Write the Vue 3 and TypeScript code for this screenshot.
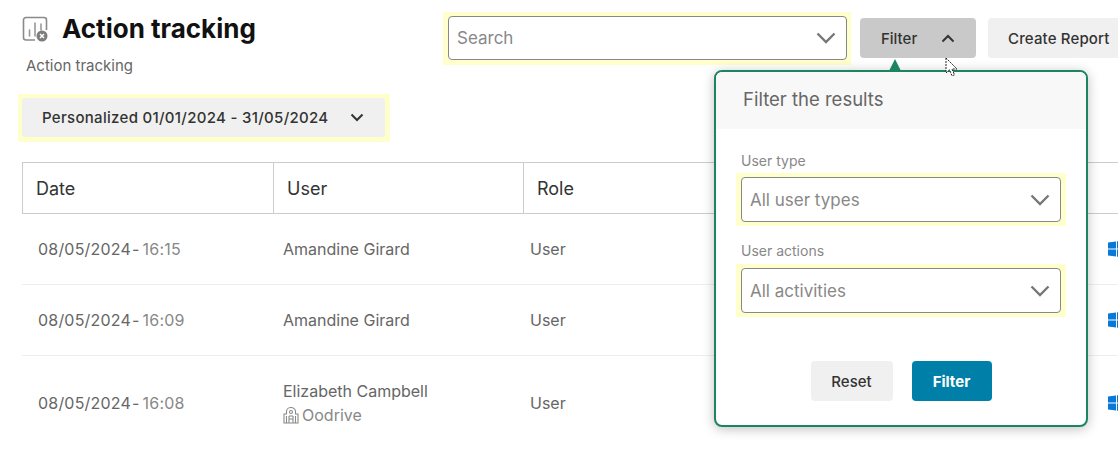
<template>
  <div class="page">
    <header class="top">
      <div class="heading">
        <div class="title-row">
          <svg class="title-icon" width="26" height="26" viewBox="0 0 26 26" fill="none">
            <path d="M13 24H4a2.500 2.500 0 0 1-2.500-2.500V4A2.500 2.500 0 0 1 4 1.500h18A2.500 2.500 0 0 1 24.500 4v10" stroke="#8a8a8a" stroke-width="1.600" />
            <path d="M7.500 14v6M13 7v13M19 8v6" stroke="#999" stroke-width="1.600" stroke-linecap="round" />
            <circle cx="20" cy="20" r="5.500" fill="#7d7d7d" />
            <path d="M18 18l4 4M22 18l-4 4" stroke="#fff" stroke-width="1.500" />
          </svg>
          <h1>Action tracking</h1>
        </div>
        <p class="subtitle">Action tracking</p>
        <div class="hl date-hl">
          <button class="date-btn">
            <span>Personalized 01/01/2024 - 31/05/2024</span>
            <svg width="14" height="9" viewBox="0 0 14 9" fill="none"><path d="M1.500 1.500L7 7l5.500-5.500" stroke="#333" stroke-width="2" /></svg>
          </button>
        </div>
      </div>

      <div class="toolbar">
        <div class="hl search-hl">
          <div class="select search">
            <span>Search</span>
            <svg class="chev" width="20" height="12" viewBox="0 0 20 12" fill="none"><path d="M1.500 1.500L10 10l8.500-8.500" stroke="#777" stroke-width="2.400" /></svg>
          </div>
        </div>
        <button class="btn filter-toggle">
          <span>Filter</span>
          <svg width="14" height="9" viewBox="0 0 14 9" fill="none"><path d="M1.500 7.500L7 2l5.500 5.500" stroke="#333" stroke-width="2" /></svg>
        </button>
        <button class="btn report">Create Report</button>
      </div>
    </header>

    <section class="table">
      <div class="thead">
        <div v-for="col in columns" :key="col" class="th">{{ col }}</div>
      </div>
      <div v-for="row in rows" :key="row.time" class="tr" :class="{ tall: row.company }">
        <div class="td date">{{ row.date }}<span class="dash">-</span><span class="time">{{ row.time }}</span></div>
        <div class="td user">
          <div>{{ row.user }}</div>
          <div v-if="row.company" class="company">
            <svg width="16" height="17" viewBox="0 0 16 17" fill="none" stroke="#8a8a8a" stroke-width="1.100">
              <path d="M1 16V7h2.500V4.500a4.500 4 0 0 1 9 0V7H15v9z" />
              <circle cx="8" cy="5" r="1.500" />
              <path d="M3.500 9v7M12.500 9v7M6 9h4M6 12h4M6 9v7M10 9v7" />
            </svg>
            <span>{{ row.company }}</span>
          </div>
        </div>
        <div class="td role">{{ row.role }}</div>
        <div class="td os">
          <svg width="20" height="18" viewBox="0 0 20 18"><path d="M0 2.600L8 1.400v7H0zM9 1.300L20 0v8.400H9zM0 9.500h8v7.100L0 15.400zM9 9.500h11V18L9 16.700z" fill="#0a78d7" /></svg>
        </div>
      </div>
    </section>

    <div class="popover">
      <span class="arrow"></span>
      <div class="pop-head">Filter the results</div>
      <div class="pop-body">
        <div v-for="f in filters" :key="f.label" class="field">
          <label>{{ f.label }}</label>
          <div class="hl field-hl">
            <div class="select">
              <span>{{ f.value }}</span>
              <svg class="chev" width="20" height="12" viewBox="0 0 20 12" fill="none"><path d="M1.500 1.500L10 10l8.500-8.500" stroke="#777" stroke-width="2.400" /></svg>
            </div>
          </div>
        </div>
        <div class="actions">
          <button class="btn reset">Reset</button>
          <button class="btn apply">Filter</button>
        </div>
      </div>
    </div>

    <svg class="cursor" width="16" height="22" viewBox="0 0 16 22">
      <path d="M1 1v15l3.500-3.200 2.500 6 2.500-1-2.500-5.800H12z" fill="#fff" stroke="#222" stroke-width="1" stroke-dasharray="2 1" />
    </svg>
  </div>
</template>

<script setup lang="ts">
interface Row {
  date: string;
  time: string;
  user: string;
  role: string;
  company?: string;
}

const columns = ['Date', 'User', 'Role', ''];

const rows: Row[] = [
  { date: '08/05/2024', time: '16:15', user: 'Amandine Girard', role: 'User' },
  { date: '08/05/2024', time: '16:09', user: 'Amandine Girard', role: 'User' },
  { date: '08/05/2024', time: '16:08', user: 'Elizabeth Campbell', role: 'User', company: 'Oodrive' },
];

const filters = [
  { label: 'User type', value: 'All user types' },
  { label: 'User actions', value: 'All activities' },
];
</script>

<style>
html,
body {
  margin: 0;
  background: #fff;
}
</style>

<style scoped>
.page {
  position: relative;
  width: 1118px;
  height: 449px;
  overflow: hidden;
  background: #fff;
  font-family: Inter, Roboto, sans-serif;
  color: #333;
}

button {
  font-family: inherit;
  border: 0;
  cursor: pointer;
}

.top {
  display: flex;
  height: 162px;
  padding-left: 18px;
  box-sizing: border-box;
}

.heading {
  width: 425px;
  flex: none;
}

.title-row {
  display: flex;
  align-items: center;
  gap: 14px;
  padding: 13px 0 0 4px;
  height: 32px;
}

h1 {
  margin: -2px 0 0;
  font-size: 26px;
  font-weight: 700;
  color: #111;
}

.subtitle {
  margin: 12px 0 0 8px;
  font-size: 15px;
  line-height: 18px;
  color: #666;
}

.hl {
  background: #ffffcc;
}

.date-hl {
  width: 372px;
  height: 48px;
  margin-top: 19px;
  padding: 4px 5px 5px 4px;
  box-sizing: border-box;
}

.date-btn {
  display: flex;
  align-items: center;
  justify-content: space-between;
  width: 100%;
  height: 100%;
  padding: 0 21px 0 20px;
  border-radius: 3px;
  background: #f0f0f0;
  color: #333;
  font-size: 15px;
  font-weight: 500;
  letter-spacing: 0.3px;
}

.toolbar {
  display: flex;
  align-items: flex-start;
  gap: 12px;
  padding-top: 12px;
  flex: none;
}

.search-hl {
  width: 408px;
  height: 53px;
  margin-right: -3px;
  padding: 4px 4px 5px 5px;
  box-sizing: border-box;
}

.select {
  display: flex;
  align-items: center;
  justify-content: space-between;
  height: 100%;
  padding: 0 10px 0 8px;
  border: 1px solid #888;
  border-radius: 4px;
  background: #fff;
  box-sizing: border-box;
  font-size: 17px;
  color: #888;
}

.btn {
  height: 40px;
  border-radius: 4px;
  font-size: 15px;
  font-weight: 500;
  color: #333;
}

.filter-toggle {
  display: flex;
  align-items: center;
  justify-content: space-between;
  width: 116px;
  margin-top: 6px;
  padding: 0 21px;
  background: #c9c9c9;
}

.report {
  width: 140px;
  margin-top: 6px;
  padding: 0 0 0 20px;
  text-align: left;
  background: #f0f0f0;
  letter-spacing: 0.15px;
}

.table {
  margin-left: 22px;
}

.thead,
.tr {
  display: grid;
  grid-template-columns: 251px 250px 585px 1fr;
}

.thead {
  grid-template-columns: 250px 250px 585px 1fr;
  height: 52px;
  border: 1px solid #ccc;
  border-right: 0;
  box-sizing: border-box;
}

.th {
  display: flex;
  align-items: center;
  padding-left: 13px;
  font-size: 18px;
  color: #333;
  border-left: 1px solid #ccc;
}

.th:first-child,
.th:last-child {
  border-left: 0;
}

.tr {
  height: 71px;
  border-bottom: 1px solid #eee;
  box-sizing: border-box;
  font-size: 16px;
  color: #666;
}

.tr.tall {
  height: 94px;
  border-bottom: 0;
}

.td {
  display: flex;
  flex-direction: column;
  justify-content: center;
}

.date {
  display: block;
  align-self: center;
  padding-left: 16px;
  letter-spacing: 0.2px;
}

.dash {
  margin: 0 3px 0 1px;
}

.time {
  color: #888;
}

.user {
  padding-left: 10px;
}

.role {
  padding-left: 7px;
}

.company {
  display: flex;
  align-items: center;
  gap: 3px;
  margin-top: 4px;
  color: #888;
}

.os {
  overflow: hidden;
}

.popover {
  position: absolute;
  top: 70px;
  left: 714px;
  width: 374px;
  height: 357px;
  border: 2px solid #1c8560;
  border-radius: 8px;
  background: #fff;
  box-sizing: border-box;
  box-shadow: 0 2px 12px rgba(0, 0, 0, 0.25);
}

.arrow {
  position: absolute;
  top: -13px;
  left: 173px;
  border-left: 6px solid transparent;
  border-right: 6px solid transparent;
  border-bottom: 12px solid #1c8560;
}

.pop-head {
  height: 57px;
  padding-left: 27px;
  border-radius: 6px 6px 0 0;
  background: #f8f8f8;
  font-size: 18.500px;
  line-height: 55px;
  color: #666;
}

.pop-body {
  padding: 23px 20px 0;
}

.field {
  margin-bottom: 16px;
}

.field label {
  display: block;
  margin: 0 0 3px 5px;
  font-size: 14px;
  line-height: 18px;
  color: #888;
}

.field + .field label {
  margin-bottom: 4px;
}

.field-hl {
  width: 330px;
  height: 53px;
  padding: 4px 5px;
  box-sizing: border-box;
}

.actions {
  display: flex;
  justify-content: center;
  gap: 19px;
  margin-top: 44px;
}

.reset {
  width: 82px;
  background: #f0f0f0;
}

.apply {
  width: 80px;
  background: #007fa8;
  color: #fff;
  font-weight: 700;
}

.cursor {
  position: absolute;
  top: 57px;
  left: 945px;
}
</style>
